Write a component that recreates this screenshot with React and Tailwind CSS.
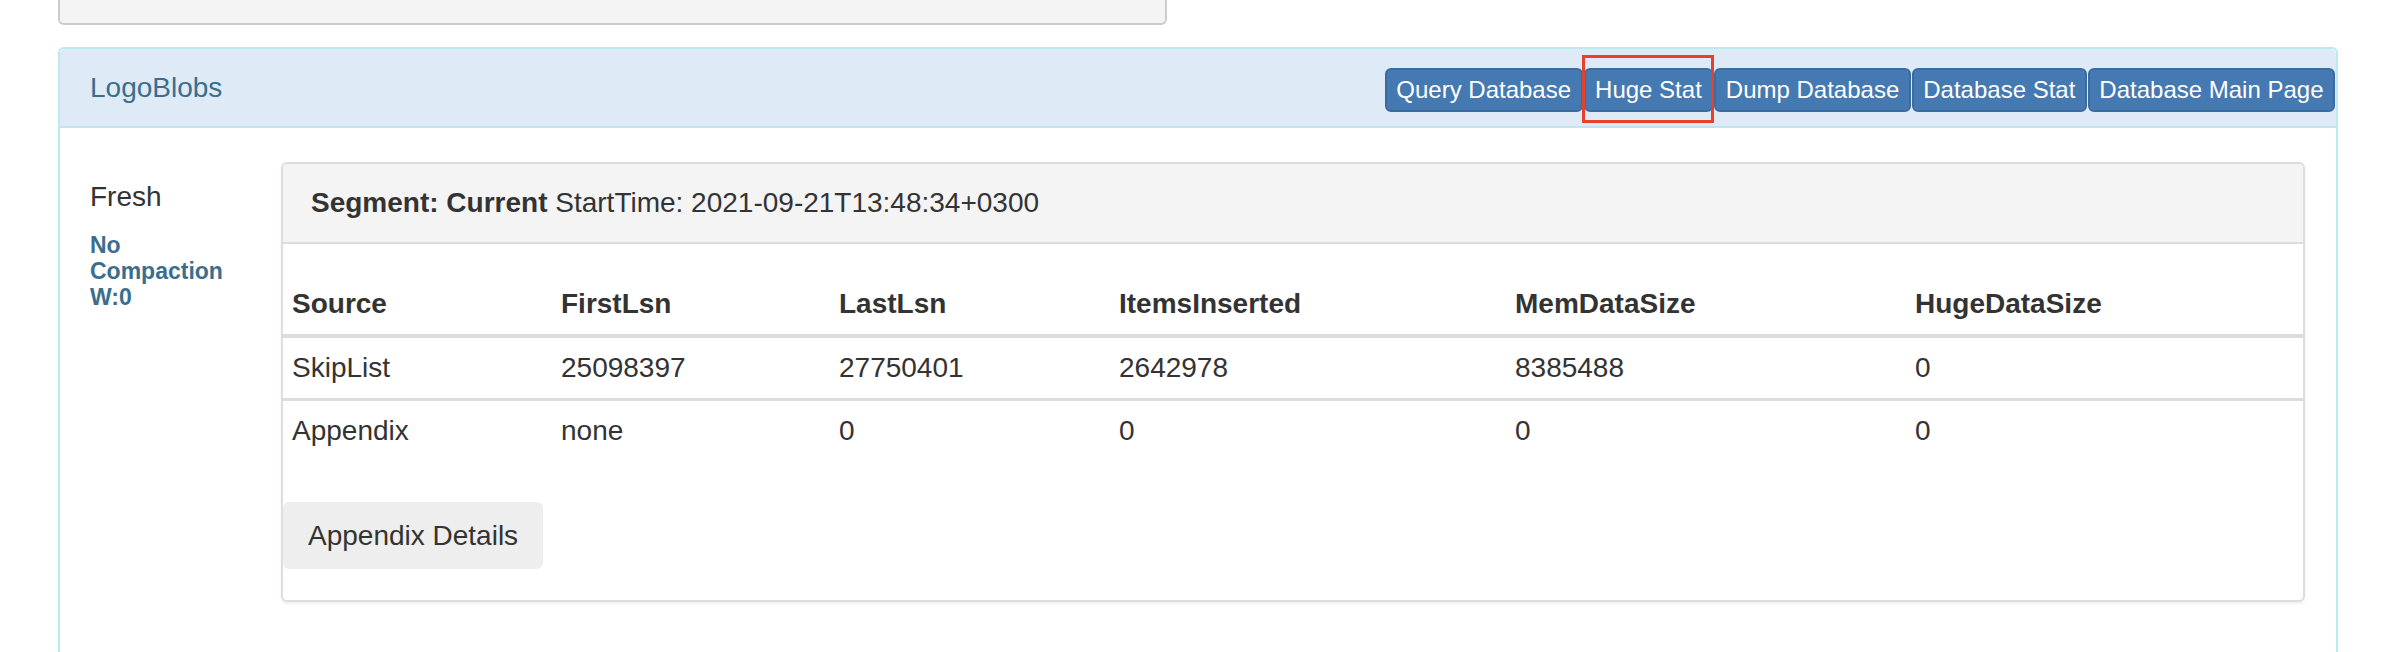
import React from 'react';

const BUTTONS = ['Query Database', 'Huge Stat', 'Dump Database', 'Database Stat', 'Database Main Page'];

const COLUMNS = [
  { label: 'Source', width: 'w-[269px]' },
  { label: 'FirstLsn', width: 'w-[278px]' },
  { label: 'LastLsn', width: 'w-[280px]' },
  { label: 'ItemsInserted', width: 'w-[396px]' },
  { label: 'MemDataSize', width: 'w-[400px]' },
  { label: 'HugeDataSize', width: '' },
];

const ROWS = [
  ['SkipList', '25098397', '27750401', '2642978', '8385488', '0'],
  ['Appendix', 'none', '0', '0', '0', '0'],
];

function HeaderButton({ label, marked }) {
  return (
    <div className="relative">
      <button
        type="button"
        className="bg-[#4579b2] border-2 border-[#3c6b9f] text-white text-[24px] leading-[36px] px-[9.5px] py-[2px] rounded-[6px] whitespace-nowrap"
      >
        {label}
      </button>
      {marked && (
        <div className="absolute -left-[2px] -right-[1px] -top-[13px] -bottom-[11px] border-[3px] border-[#e4422c] pointer-events-none" />
      )}
    </div>
  );
}

function SegmentCard() {
  return (
    <div className="flex-1 border-2 border-[#dddddd] rounded-[6px] shadow-[0_2px_3px_rgba(0,0,0,0.06)]">
      <div className="bg-[#f4f4f4] px-[28px] py-[19px] border-b-2 border-[#dddddd] rounded-t-[5px] text-[28px] leading-[40px]">
        <span className="font-bold">Segment: Current</span> StartTime: 2021-09-21T13:48:34+0300
      </div>
      <div className="pt-[30px] pb-[31px]">
        <table className="w-full border-collapse text-[28px] leading-[40px]">
          <thead>
            <tr className="border-b-4 border-[#dddddd]">
              {COLUMNS.map(col => (
                <th key={col.label} className={`${col.width} text-left font-bold px-[9px] py-[10px]`}>
                  {col.label}
                </th>
              ))}
            </tr>
          </thead>
          <tbody>
            {ROWS.map((row, i) => (
              <tr key={i} className={i === 0 ? 'border-b-[3px] border-[#dddddd]' : ''}>
                {row.map((cell, j) => (
                  <td key={j} className="px-[9px] py-[10px]">{cell}</td>
                ))}
              </tr>
            ))}
          </tbody>
        </table>
        <button
          type="button"
          className="mt-[41px] bg-[#eeeeee] rounded-[6px] px-[25px] h-[67px] text-[28px] leading-[40px] text-[#333333]"
        >
          Appendix Details
        </button>
      </div>
    </div>
  );
}

export default function App() {
  return (
    <div className="min-h-screen bg-white text-[#333333] font-['Liberation_Sans',Arial,sans-serif]">
      <div className="ml-[58px] w-[1109px] h-[25px] bg-[#f4f4f4] border-2 border-t-0 border-[#cccccc] rounded-b-[6px]" />

      <div className="ml-[58px] mt-[22px] w-[2280px] border-2 border-[#bce8f1] rounded-[6px]">
        <div className="h-[79px] bg-[#deebf6] border-b-2 border-[#c3e3ee] rounded-t-[5px] flex items-start justify-between pt-[19px] pl-[30px] pr-[1px]">
          <div className="text-[28px] leading-[40px] text-[#3b6e8e]">LogoBlobs</div>
          <div className="flex gap-[1px]">
            {BUTTONS.map(b => (
              <HeaderButton key={b} label={b} marked={b === 'Huge Stat'} />
            ))}
          </div>
        </div>

        <div className="flex pt-[34px] pl-[30px] pr-[31px] pb-[60px]">
          <div className="w-[191px] shrink-0">
            <div className="mt-[15px] text-[28px] leading-[40px]">Fresh</div>
            <div className="mt-[15px] text-[23px] leading-[26px] font-bold text-[#3b6e8e]">
              <div>No</div>
              <div>Compaction</div>
              <div>W:0</div>
            </div>
          </div>
          <SegmentCard />
        </div>
      </div>
    </div>
  );
}
